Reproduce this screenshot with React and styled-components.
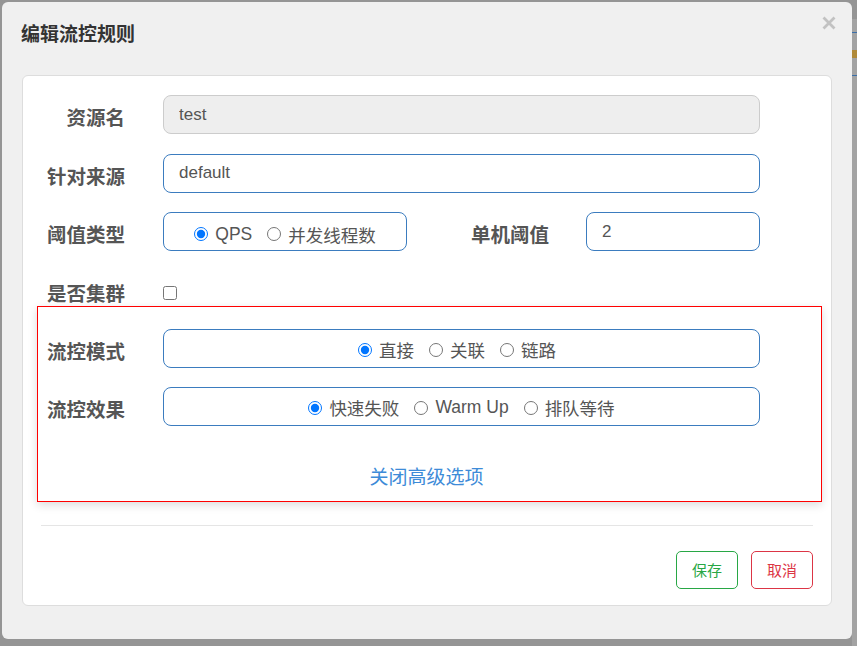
import React from "react";
import styled, { createGlobalStyle } from "styled-components";

const GlobalStyle = createGlobalStyle`
  html, body {
    margin: 0;
    padding: 0;
    width: 857px;
    height: 646px;
    overflow: hidden;
    background: #959595;
    font-family: "Liberation Sans", "Noto Sans CJK SC", sans-serif;
  }
  * { box-sizing: border-box; }
`;

const Screen = styled.div`
  position: relative;
  width: 857px;
  height: 646px;
  padding: 2px 0 0 2px;
`;

const PageBehind = styled.div`
  position: absolute;
  left: 852px;
  top: 19px;
  right: 0;
  bottom: 0;
  background:
    linear-gradient(#3b6fa8, #3b6fa8) 0 13px / 100% 1px no-repeat,
    linear-gradient(#b08a3a, #b08a3a) 0 31px / 100% 8px no-repeat,
    linear-gradient(#3b6fa8, #3b6fa8) 0 56px / 100% 1px no-repeat,
    #a3a3a3;
`;

const Dialog = styled.div`
  position: relative;
  width: 850px;
  height: 637px;
  background: #f0f0f0;
  border-radius: 6px;
  padding: 0 20px;
  display: flex;
  flex-direction: column;
`;

const Header = styled.div`
  height: 73px;
  display: flex;
  justify-content: space-between;
  align-items: flex-start;
`;

const Title = styled.h4`
  margin: 23px 0 0 -1px;
  font-size: 19px;
  line-height: 19px;
  font-weight: bold;
  color: #333;
`;

const CloseButton = styled.button`
  margin: 14px -4px 0 0;
  padding: 0;
  border: none;
  background: none;
  width: 14px;
  height: 14px;
  display: flex;
  color: #c2c2c2;
`;

const Panel = styled.div`
  height: 531px;
  background: #fff;
  border: 1px solid #ddd;
  border-radius: 6px;
  padding-top: 19px;
`;

const Row = styled.div`
  display: flex;
  align-items: center;
  height: ${(p) => p.$h || 39}px;
  margin-top: ${(p) => p.$mt || 0}px;
`;

const Label = styled.label`
  flex: none;
  width: ${(p) => p.$w}px;
  margin-right: ${(p) => p.$mr || 38}px;
  padding-top: ${(p) => (p.$pt === undefined ? 4 : p.$pt)}px;
  text-align: right;
  font-size: 19.5px;
  font-weight: bold;
  color: #555;
  white-space: nowrap;
`;

const TextInput = styled.input`
  flex: none;
  width: ${(p) => p.$w}px;
  height: 39px;
  border: 1px solid ${(p) => (p.readOnly ? "#cccccc" : "#3b7cbf")};
  background: ${(p) => (p.readOnly ? "#eeeeee" : "#ffffff")};
  border-radius: 8px;
  padding: 0 15px;
  font-family: inherit;
  font-size: 17px;
  color: #555;
  outline: none;
`;

const RadioBox = styled.div`
  flex: none;
  width: ${(p) => p.$w}px;
  height: 39px;
  border: 1px solid #3b7cbf;
  border-radius: 8px;
  padding-top: ${(p) => p.$pt || 3}px;
  padding-right: ${(p) => p.$pr || 0}px;
  display: flex;
  align-items: center;
  justify-content: center;
  gap: 15px;
`;

const Option = styled.label`
  display: inline-flex;
  align-items: center;
  gap: 7px;
  font-size: 17.5px;
  color: #555;
  white-space: nowrap;
`;

const Radio = styled.input.attrs({ type: "radio" })`
  width: 14px;
  height: 14px;
  margin: 0;
  accent-color: #0075ff;
`;

const Checkbox = styled.input.attrs({ type: "checkbox" })`
  width: 14px;
  height: 14px;
  margin: 0;
`;

const Advanced = styled.div`
  margin: 0 9px 0 14px;
  border: 1px solid #ff0000;
  box-shadow: 0 3px 9px rgba(0, 0, 0, 0.14);
  padding: 22px 0 13px;
`;

const ToggleLink = styled.a`
  display: block;
  margin-top: 42px;
  padding-right: 6px;
  text-align: center;
  font-size: 19px;
  line-height: 20px;
  color: #3d8bd8;
  text-decoration: none;
  cursor: pointer;
`;

const Divider = styled.div`
  height: 1px;
  background: #e5e5e5;
  margin: 23px 18px 0;
`;

const Footer = styled.div`
  display: flex;
  justify-content: flex-end;
  gap: 13px;
  margin: 25px 18px 0;
`;

const ActionButton = styled.button`
  width: 62px;
  height: 38px;
  background: #fff;
  border: 1px solid ${(p) => p.$color};
  color: ${(p) => p.$color};
  border-radius: 5px;
  font-family: inherit;
  font-size: 15px;
  padding: 0;
`;

const RadioGroup = ({ name, options, checked, width, pt, pr }) => (
  <RadioBox $w={width} $pt={pt} $pr={pr}>
    {options.map((o) => (
      <Option key={o}>
        <Radio name={name} defaultChecked={o === checked} />
        {o}
      </Option>
    ))}
  </RadioBox>
);

export default function App() {
  return (
    <>
      <GlobalStyle />
      <Screen>
        <PageBehind />
        <Dialog>
          <Header>
            <Title>编辑流控规则</Title>
            <CloseButton aria-label="close">
              <svg width="14" height="14" viewBox="0 0 14 14">
                <path d="M1.5 1.5 L12.5 12.5 M12.5 1.5 L1.5 12.5" stroke="currentColor" strokeWidth="2.8" />
              </svg>
            </CloseButton>
          </Header>
          <Panel>
            <Row>
              <Label $w={102}>资源名</Label>
              <TextInput $w={597} readOnly defaultValue="test" />
            </Row>
            <Row $mt={19.5}>
              <Label $w={102}>针对来源</Label>
              <TextInput $w={597} defaultValue="default" />
            </Row>
            <Row $mt={19.5}>
              <Label $w={102}>阈值类型</Label>
              <RadioGroup name="grade" width={244} pt={5} options={["QPS", "并发线程数"]} checked="QPS" />
              <Label $w={142} $mr={37}>单机阈值</Label>
              <TextInput $w={174} defaultValue="2" />
            </Row>
            <Row $mt={28.5} $h={26}>
              <Label $w={102} $pt={0}>是否集群</Label>
              <Checkbox />
            </Row>
            <Advanced>
              <Row>
                <Label $w={87}>流控模式</Label>
                <RadioGroup name="strategy" width={597} pr={9} options={["直接", "关联", "链路"]} checked="直接" />
              </Row>
              <Row $mt={19}>
                <Label $w={87}>流控效果</Label>
                <RadioGroup name="behavior" width={597} options={["快速失败", "Warm Up", "排队等待"]} checked="快速失败" />
              </Row>
              <ToggleLink>关闭高级选项</ToggleLink>
            </Advanced>
            <Divider />
            <Footer>
              <ActionButton $color="#28a745">保存</ActionButton>
              <ActionButton $color="#dc3545">取消</ActionButton>
            </Footer>
          </Panel>
        </Dialog>
      </Screen>
    </>
  );
}
